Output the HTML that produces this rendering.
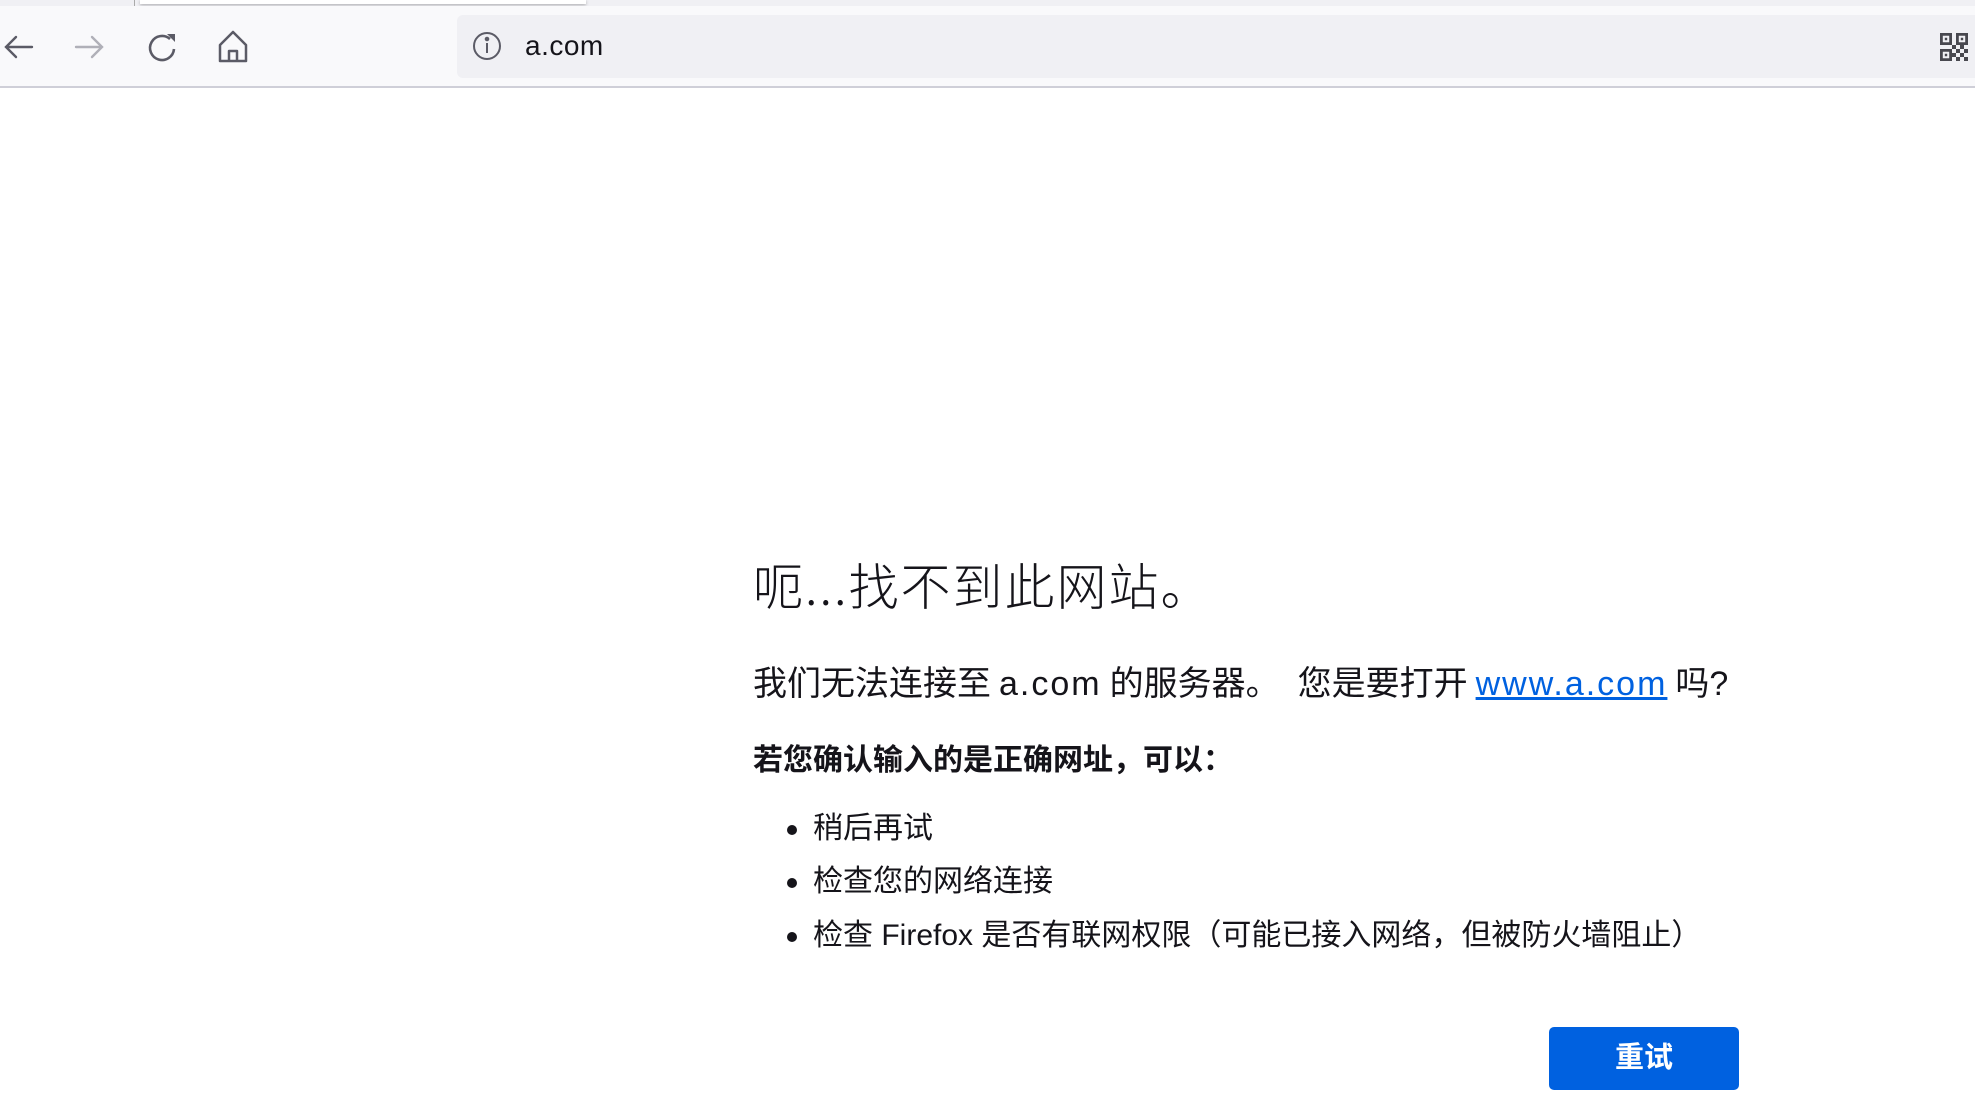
<!DOCTYPE html>
<html><head><meta charset="utf-8"><style>
html,body{margin:0;padding:0;width:1975px;height:1101px;overflow:hidden;background:#fff;font-family:"Liberation Sans","Noto Sans CJK SC",sans-serif;color:#15141a}
.tabs{position:absolute;left:0;top:0;width:1975px;height:6px;background:#f0f0f4}
.tabsh{position:absolute;left:140px;top:0;width:446px;height:4px;background:#fff;box-shadow:0 1px 3px rgba(0,0,0,.3)}
.vl{position:absolute;left:134px;top:0;width:1px;height:6px;background:#aaa}
.tb{position:absolute;left:0;top:6px;width:1975px;height:80px;background:#f9f9fb;border-bottom:2px solid #cfcfd8}
.url{position:absolute;left:457px;top:9px;width:1530px;height:63px;background:#f0f0f4;border-radius:6px}
.url span{position:absolute;left:68px;top:15px;font-size:28px;color:#15141a;letter-spacing:.5px}
svg.ic{position:absolute}
h1{position:absolute;left:753px;top:547px;margin:0;font-weight:300;font-size:50px;white-space:nowrap;font-family:"Noto Sans CJK SC",sans-serif;line-height:74px;letter-spacing:2px}
.p{position:absolute;left:753px;top:660px;font-size:34px;white-space:nowrap;line-height:48px}
.p a{color:#0061e0;text-decoration:underline}
.l{letter-spacing:2px}
.s{display:inline-block;width:8px}
.s2{display:inline-block;width:18px}
.b{position:absolute;left:753px;top:740px;font-size:30px;font-weight:bold;white-space:nowrap;line-height:42px}
.li{position:absolute;left:813px;font-size:30px;white-space:nowrap;line-height:42px}
.dot{position:absolute;left:787px;width:10px;height:10px;border-radius:50%;background:#15141a}
.btn{position:absolute;left:1549px;top:1027px;width:190px;height:63px;background:#0061e0;border-radius:5px;color:#fff;font-weight:bold;font-size:29px;text-align:center;line-height:63px}
</style></head><body>
<div class="tabs"></div><div class="vl"></div><div class="tabsh"></div>
<div class="tb">
<svg class="ic" style="left:2px;top:25px" width="32" height="32" viewBox="0 0 32 32" fill="none" stroke="#5b5b66" stroke-width="2.4" stroke-linecap="round"><path d="M30 16H4M14 6L4 16l10 10"/></svg>
<svg class="ic" style="left:74px;top:25px" width="32" height="32" viewBox="0 0 32 32" fill="none" stroke="#b0b0b8" stroke-width="2.4" stroke-linecap="round"><path d="M2 16h26M18 6l10 10-10 10"/></svg>
<svg class="ic" style="left:145px;top:24px" width="34" height="34" viewBox="0 0 34 34" fill="none" stroke="#5b5b66" stroke-width="2.6"><path d="M25 9A12 12 0 1 0 29 19"/><path d="M22 4h8v8z" fill="#5b5b66" stroke="none"/></svg>
<svg class="ic" style="left:216px;top:23px" width="34" height="36" viewBox="0 0 34 36" fill="none" stroke="#5b5b66" stroke-width="2.5" stroke-linejoin="round"><path d="M17 3L4 16v16h26V16z"/><path d="M13 32V22h8v10"/></svg>
<div class="url">
<svg class="ic" style="left:15px;top:16px" width="30" height="30" viewBox="0 0 30 30" fill="none" stroke="#5b5b66" stroke-width="2"><circle cx="15" cy="15" r="13"/><path d="M15 12v10"/><circle cx="15" cy="8" r="1.3" fill="#5b5b66"/></svg>
<span>a.com</span></div>
<svg class="ic" style="left:1940px;top:27px" width="28" height="28" viewBox="0 0 7 7" fill="#48484f"><path d="M0 0h3v3H0zM4 0h3v3H4zM0 4h3v3H0z"/><path d="M.7.7h1.6v1.6H.7zM4.7.7h1.6v1.6H4.7zM.7 4.7h1.6v1.6H.7z" fill="#f0f0f4"/><path d="M1.2 1.2h.6v.6h-.6zM5.2 1.2h.6v.6h-.6zM1.2 5.2h.6v.6h-.6zM3 3h1v1H3zM4 4h1v1H4zM5 3h1v1H5zM6 4h1v1H6zM3 5h1v1H3zM5 5h1v1H5zM4 6h1v1H4zM6 6h1v1H6z"/></svg>
</div>
<h1>呃...找不到此网站。</h1>
<div class="p">我们无法连接至<span class="s"></span><span class="l">a.com</span><span class="s"></span>的服务器。<span class="s2"></span>您是要打开<span class="s"></span><a class="l">www.a.com</a><span class="s"></span>吗?</div>
<div class="b">若您确认输入的是正确网址，可以：</div>
<div class="dot" style="top:825px"></div><div class="li" style="top:808px">稍后再试</div>
<div class="dot" style="top:878px"></div><div class="li" style="top:861px">检查您的网络连接</div>
<div class="dot" style="top:932px"></div><div class="li" style="top:915px">检查 Firefox 是否有联网权限（可能已接入网络，但被防火墙阻止）</div>
<div class="btn">重试</div>
</body></html>
